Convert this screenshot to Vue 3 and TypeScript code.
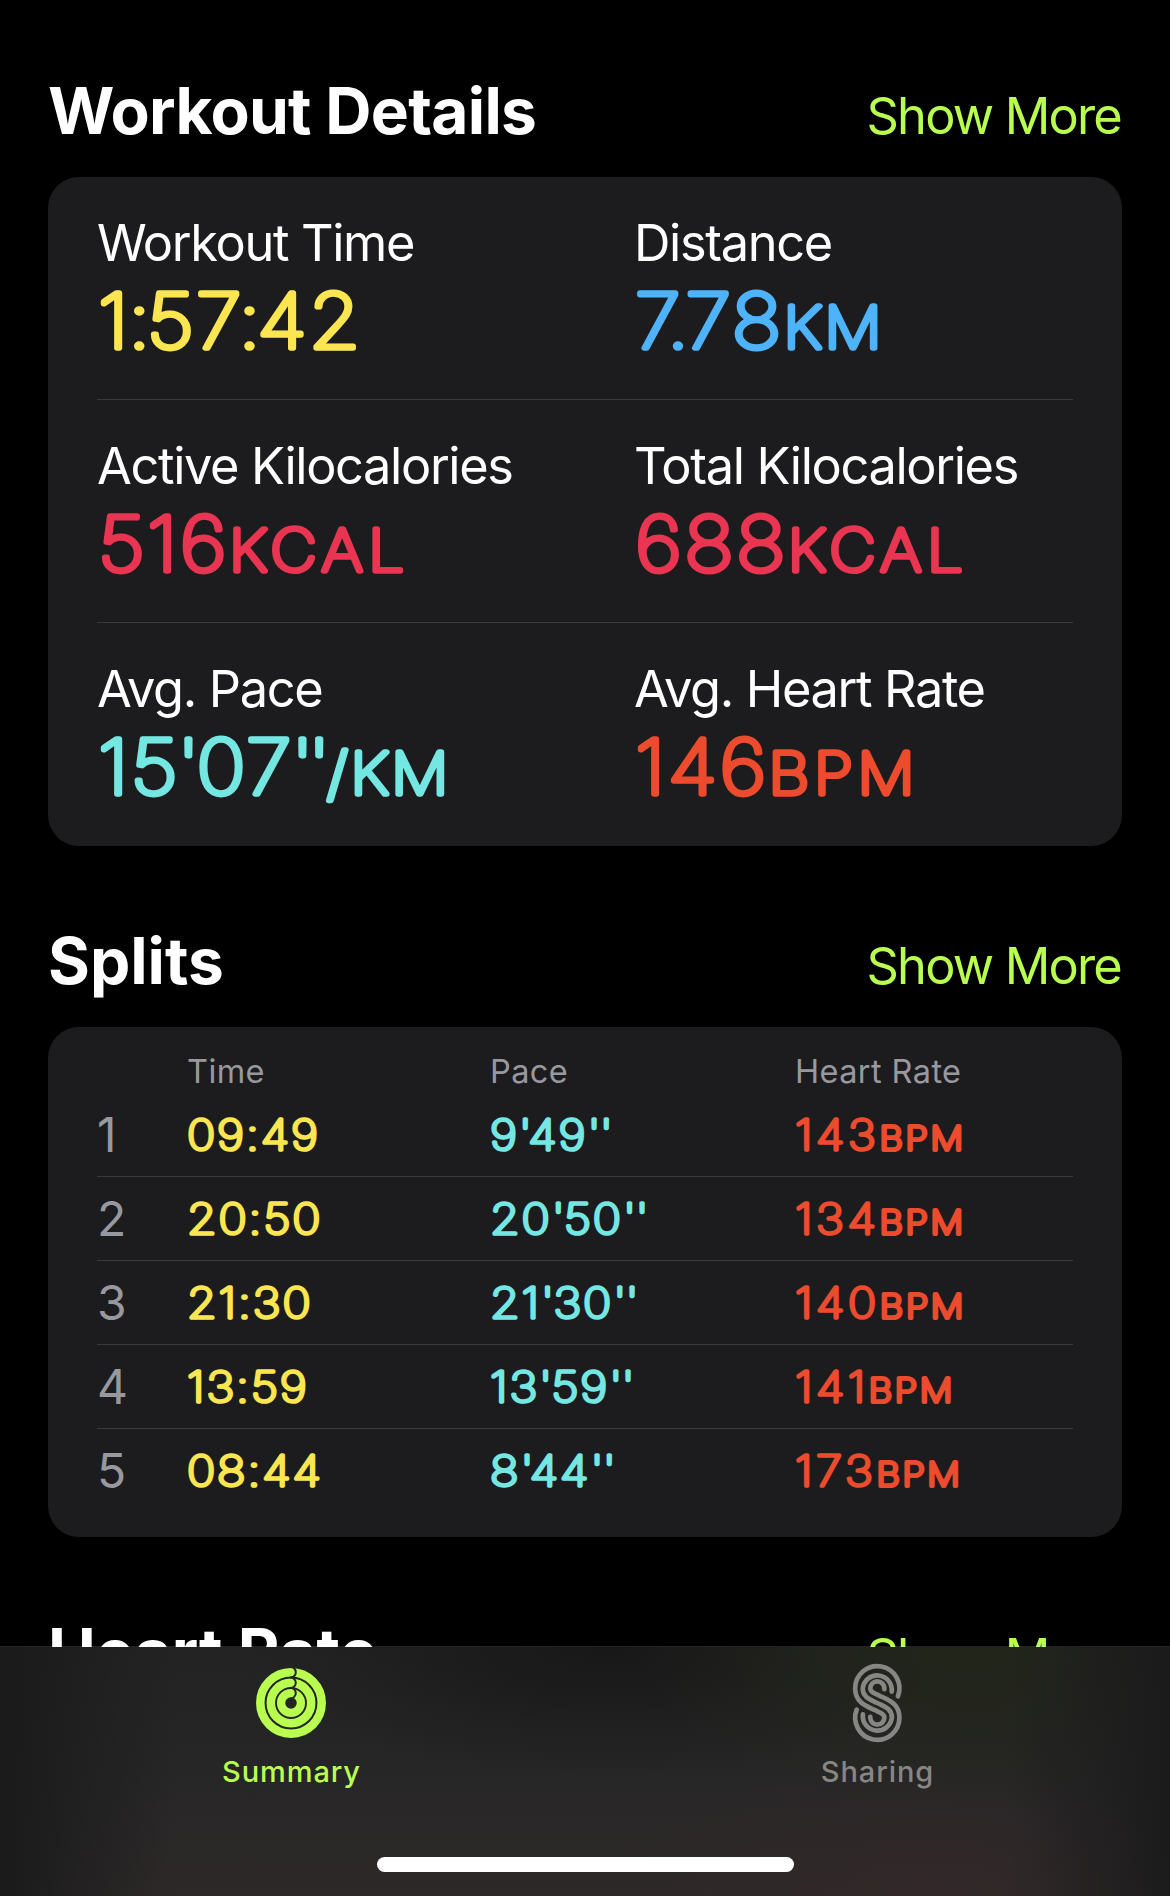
<script setup lang="ts">
interface Metric {
  label: string
  value: string
  unit: string
  tone: string
}

interface Split {
  index: number
  time: string
  pace: string
  bpm: string
}

const metricRows: Metric[][] = [
  [
    { label: 'Workout Time', value: '1:57:42', unit: '', tone: 'yellow' },
    { label: 'Distance', value: '7.78', unit: 'KM', tone: 'blue' },
  ],
  [
    { label: 'Active Kilocalories', value: '516', unit: 'KCAL', tone: 'pink' },
    { label: 'Total Kilocalories', value: '688', unit: 'KCAL', tone: 'pink' },
  ],
  [
    { label: 'Avg. Pace', value: "15'07''", unit: '/KM', tone: 'cyan' },
    { label: 'Avg. Heart Rate', value: '146', unit: 'BPM', tone: 'red' },
  ],
]

const splits: Split[] = [
  { index: 1, time: '09:49', pace: "9'49''", bpm: '143' },
  { index: 2, time: '20:50', pace: "20'50''", bpm: '134' },
  { index: 3, time: '21:30', pace: "21'30''", bpm: '140' },
  { index: 4, time: '13:59', pace: "13'59''", bpm: '141' },
  { index: 5, time: '08:44', pace: "8'44''", bpm: '173' },
]

// Per-glyph kerning: punctuation sits tighter than the digits around it.
function kerning(value: string, before: number, after: number): string {
  const chars = [...value, ' ']
  return chars
    .map((c, i) => {
      let dx = 0
      if (/[:'.]/.test(c)) dx += c === '.' ? -5 : before
      if (i > 0 && /[:'.]/.test(chars[i - 1])) dx += chars[i - 1] === '.' ? -4.5 : after
      return dx.toFixed(1)
    })
    .join(' ')
}
</script>

<template>
  <div class="screen">
    <main class="content">
      <header class="section-head">
        <h2>Workout Details</h2>
        <a class="more">Show More</a>
      </header>
      <section class="card details">
        <div v-for="(row, r) in metricRows" :key="r" class="metric-row">
          <div v-for="m in row" :key="m.label" class="metric">
            <div class="label">{{ m.label }}</div>
            <svg class="big" :class="m.tone" width="420" height="80">
              <text x="1" y="61.3" transform="scale(1.1 1)" :dx="kerning(m.value, -2.5, -5.1)">{{ m.value }}<tspan v-if="m.unit" class="unit" :class="m.unit.toLowerCase()">{{ m.unit }}</tspan></text>
            </svg>
          </div>
        </div>
      </section>

      <header class="section-head">
        <h2 class="loose">Splits</h2>
        <a class="more">Show More</a>
      </header>
      <section class="card splits">
        <div class="split-head">
          <span></span><span>Time</span><span>Pace</span><span>Heart Rate</span>
        </div>
        <div v-for="s in splits" :key="s.index" class="split-row">
          <span class="idx">{{ s.index }}</span>
          <svg class="small yellow" width="240" height="60">
            <text x="0" y="57.3" transform="scale(1.13 1)">{{ s.time }}</text>
          </svg>
          <svg class="small cyan" width="240" height="60">
            <text x="0" y="57.3" transform="scale(1.13 1)" :dx="kerning(s.pace, 0, -2.3)">{{ s.pace }}</text>
          </svg>
          <svg class="small red" width="240" height="60">
            <text x="0" y="57.3" transform="scale(1.13 1)">{{ s.bpm }}<tspan class="unit">BPM</tspan></text>
          </svg>
        </div>
      </section>

      <header class="section-head">
        <h2 class="loose">Heart Rate</h2>
        <a class="more">Show More</a>
      </header>
    </main>

    <nav class="tabbar">
      <div class="tab active">
        <svg class="icon" width="70" height="78" viewBox="0 -4 70 78" fill="none">
          <g stroke="currentColor">
            <circle cx="35" cy="35" r="30.7" stroke-width="8.5" />
            <circle cx="35" cy="35" r="20.2" stroke-width="8.5" />
            <circle cx="35" cy="35" r="9.9" stroke-width="8.3" />
          </g>
          <g stroke="#252526" stroke-width="2">
            <path d="M34.5 -1A5.3 5.3 0 0 1 34.5 9.6" />
            <path d="M34.5 9.5A5.3 5.3 0 0 1 34.5 20.1" />
            <path d="M34.5 19.8A5.3 5.3 0 0 1 34.5 30.4" />
          </g>
        </svg>
        <span>Summary</span>
      </div>
      <div class="tab">
        <svg class="icon" width="48.6" height="78" viewBox="0 0 145 232" fill="none" stroke="currentColor" stroke-width="14" stroke-linecap="round">
          <path d="M134 96A66 66 0 1 0 6.5 72.5C6.5 112 36 124 62.5 136C80 145 93.5 147 93.5 159.5A21 21 0 0 1 51.5 159.5V157" />
          <path d="M115.5 82A43.5 43.5 0 1 0 29 72.5C29 98 48 104 72.5 116S116 134 116 159.5A43.5 43.5 0 0 1 29.5 150" />
          <path d="M93.5 75V72.5A21 21 0 0 0 51.5 72.5C51.5 85 65 87 82.5 96C109 108 138.5 120 138.5 159.5A66 66 0 1 1 11 136" />
        </svg>
        <span>Sharing</span>
      </div>
      <div class="home"></div>
    </nav>
  </div>
</template>

<style>
body {
  background: #000;
}
</style>

<style scoped>
.screen {
  position: relative;
  width: 1170px;
  height: 1896px;
  overflow: hidden;
  background: #000;
  color: #fff;
  font-family: Inter, "Liberation Sans", sans-serif;
}
.content {
  display: flex;
  flex-direction: column;
  padding: 0 48px;
}
.section-head {
  display: flex;
  justify-content: space-between;
  align-items: baseline;
  box-sizing: border-box;
  height: 181px;
  padding-top: 76px;
  line-height: 78px;
  white-space: nowrap;
}
.section-head:first-child {
  height: 177px;
  padding-top: 72px;
}
h2 {
  margin: 0;
  font-size: 64px;
  font-weight: 700;
  letter-spacing: -0.7px;
}
h2.loose {
  letter-spacing: 0;
}
.more {
  padding-right: 1px;
  font-size: 50.5px;
  letter-spacing: -1.8px;
  color: #b9ff4f;
}
.card {
  box-sizing: border-box;
  padding: 0 49px;
  border-radius: 31px;
  background: #1c1c1e;
}
.details {
  height: 669px;
}
.metric-row {
  display: grid;
  grid-template-columns: 537px 1fr;
  box-sizing: border-box;
  height: 223px;
  padding-top: 36px;
  border-bottom: 1px solid #3a3a3c;
}
.metric {
  display: flex;
  flex-direction: column;
}
.label {
  font-size: 50.5px;
  line-height: 60px;
  height: 74px;
  letter-spacing: -1.35px;
  white-space: nowrap;
}
svg {
  display: block;
  overflow: visible;
}
svg text {
  fill: currentColor;
  stroke: currentColor;
  stroke-linejoin: round;
  stroke-linecap: round;
  font-weight: 100;
}
.big text {
  font-size: 75.5px;
  letter-spacing: 2px;
  stroke-width: 5.6px;
}
.big .unit {
  font-size: 58px;
  letter-spacing: 2.5px;
}
.big .unit.kcal {
  letter-spacing: 5.2px;
}
.big .unit.bpm {
  letter-spacing: 4.3px;
}
.small text {
  font-size: 42.2px;
  letter-spacing: 1.7px;
  stroke-width: 3.7px;
}
.small.red text {
  letter-spacing: 3.2px;
}
.small .unit {
  font-size: 32.2px;
  letter-spacing: 2.5px;
  stroke-width: 4.1px;
}
.splits {
  height: 510px;
}
.split-head,
.split-row {
  display: grid;
  grid-template-columns: 90px 303px 305px 1fr;
}
.split-head {
  height: 66px;
  padding-top: 25px;
  box-sizing: border-box;
  font-size: 32.5px;
  line-height: 40px;
  letter-spacing: 0.4px;
  color: #98989f;
}
.split-row {
  box-sizing: border-box;
  height: 84px;
  border-bottom: 1px solid #3a3a3c;
}
.metric-row:last-child,
.split-row:last-child {
  border-bottom: 0;
}
.split-row .idx {
  font-size: 48px;
  line-height: 84px;
  color: #98989f;
}
.yellow { color: #fbe651; }
.blue { color: #4fb3fb; }
.pink { color: #e93551; }
.cyan { color: #75e7e3; }
.red { color: #ec4b2d; }

.tabbar {
  position: absolute;
  left: 0;
  right: 0;
  bottom: 0;
  height: 250px;
  box-sizing: border-box;
  display: flex;
  border-top: 1px solid rgba(255, 255, 255, 0.14);
  background:
    linear-gradient(90deg, rgba(26, 26, 27, 0.95), rgba(26, 26, 27, 0) 15%, rgba(26, 26, 27, 0) 86%, rgba(26, 26, 27, 0.9)),
    radial-gradient(ellipse 330px 170px at 970px 0, rgba(34, 38, 24, 0.9), rgba(34, 38, 24, 0)),
    radial-gradient(ellipse 360px 130px at 610px 0, rgba(23, 23, 23, 0.95), rgba(23, 23, 23, 0)),
    radial-gradient(ellipse 330px 130px at 930px 100%, rgba(51, 40, 41, 0.9), rgba(51, 40, 41, 0)),
    linear-gradient(#232324, #272627 50%, #2d2928);
  background-clip: padding-box;
}
.tab {
  width: 588px;
  box-sizing: border-box;
  padding-top: 17px;
  padding-left: 2px;
  display: flex;
  flex-direction: column;
  align-items: center;
  color: #868684;
  font-size: 29px;
  font-weight: 500;
  line-height: 36px;
  letter-spacing: 0.9px;
}
.tab.active {
  width: 582px;
  padding-left: 0;
  color: #b9ff4f;
}
.tab span {
  margin-top: 12px;
  padding-left: 1px;
}
.home {
  position: absolute;
  left: 377px;
  bottom: 24px;
  width: 417px;
  height: 15px;
  border-radius: 8px;
  background: #fff;
}
</style>
